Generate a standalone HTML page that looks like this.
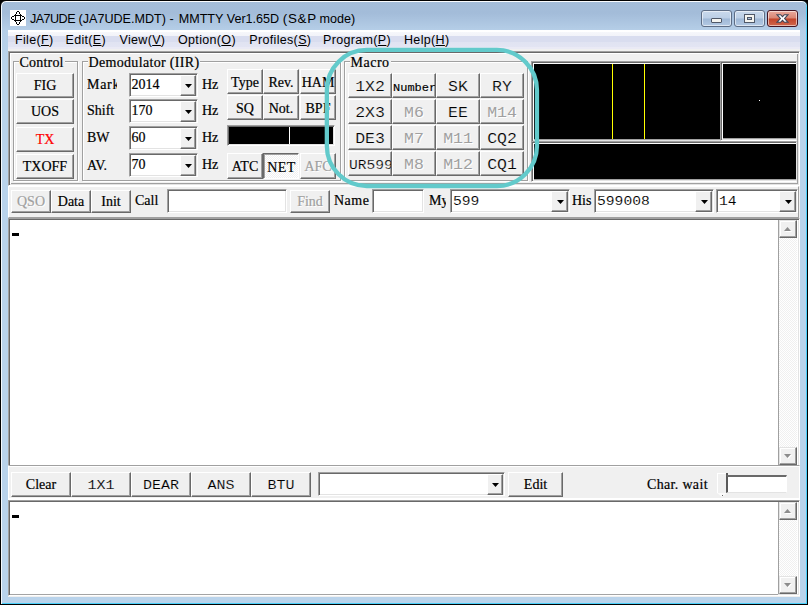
<!DOCTYPE html>
<html>
<head>
<meta charset="utf-8">
<title>MMTTY</title>
<style>
html,body{margin:0;padding:0;}
body{width:808px;height:605px;overflow:hidden;background:#000;position:relative;font-family:"Liberation Serif",serif;font-size:14px;color:#000;-webkit-text-stroke:0.2px currentColor;}
.m,.cb.mono>span,#menu,#ttext{-webkit-text-stroke:0;}
.m>span{-webkit-text-stroke:0.2px #f0f0f0;}
.m.dis>span{-webkit-text-stroke:0;}
.cb.mono>span{-webkit-text-stroke:0.12px #fff;}
.m.s>span{-webkit-text-stroke:0.15px #f0f0f0;}
.abs,#win *{position:absolute;box-sizing:border-box;}
#win u,#ttext span{position:static;}
#win{position:absolute;left:0;top:0;width:808px;height:605px;overflow:hidden;}
#client{left:8px;top:30px;width:792px;height:567px;background:#f0f0f0;}
/* classic raised button */
.b{background:#f0f0f0;border:1px solid;border-color:#fff #696969 #696969 #fff;box-shadow:inset -1px -1px 0 #a0a0a0, inset 1px 1px 0 #f0f0f0;text-align:center;white-space:nowrap;overflow:hidden;font-size:14px;line-height:23px;}
.b.dis{color:#a0a0a0;text-shadow:1px 1px 0 #fff;}
.m{font-family:"Liberation Mono",monospace;font-size:16.5px;line-height:26px;}
.m>span{left:0;right:0;top:0;height:100%;transform:scaleY(.88);transform-origin:50% 75%;}
.scope{border:1px solid;border-color:#a0a0a0 #fff #fff #a0a0a0;box-shadow:inset 1px 1px 0 #696969, inset -1px -1px 0 #e3e3e3, inset 2px 2px 0 #fff, inset -2px -2px 0 #a0a0a0;background:#000;padding:2px;background-clip:content-box;}
.sunk{border:1px solid;border-color:#a0a0a0 #fff #fff #a0a0a0;box-shadow:inset 1px 1px 0 #696969, inset -1px -1px 0 #e3e3e3;background:#fff;}
.lbl{white-space:nowrap;font-size:14px;line-height:16px;}
.grp{border:1px solid #a0a0a0;box-shadow:1px 1px 0 #fff, inset 1px 1px 0 #fff;}
.grp>span{left:4.5px;top:-7px;background:#f0f0f0;padding:0 1px;font-size:14px;line-height:16px;white-space:nowrap;}
.cb{}
.cb>i{right:1px;top:1px;bottom:0;width:16px;background:#f0f0f0;border:1px solid;border-color:#fff #696969 #696969 #fff;box-shadow:inset -1px -1px 0 #a0a0a0;}
.cb>i:after{content:"";position:absolute;left:4px;top:8px;width:7px;height:4px;background:#000;clip-path:polygon(0 0,100% 0,50% 100%);}
.cb>span{left:1.5px;top:2px;font-size:14px;line-height:18px;white-space:nowrap;}
.panel{border:1px solid;border-color:#a0a0a0 #fff #fff #a0a0a0;box-shadow:inset 1px 1px 0 #696969, inset -1px -1px 0 #e3e3e3, inset 2px 2px 0 #fff, inset -2px -2px 0 #a0a0a0;}
.raised{border:1px solid;border-color:#fff #a0a0a0 #a0a0a0 #fff;}
.lowrai{border:1px solid;border-color:#a0a0a0 #fff #fff #fff;box-shadow:inset 0 1px 0 #fff, inset 0 -1px 0 #fff;}
#frame{border:1px solid #000;border-radius:6px 6px 0 0;background:linear-gradient(#a4bdd9 0,#a3bcd9 12px,#b6cfe8 30px,#b9d3eb 60px,#b9d3eb 100%);box-shadow:inset 0 1px 0 #fafcfe, inset 1px 0 0 #f4f9fd, inset -1px 0 0 #4ad0fa, inset 0 -1px 0 #4ad0fa;}
#client{background:#f0f0f0;}
.cap{border:1px solid #5d6d85;border-radius:3px;background:linear-gradient(#c9d9ec 0,#bccfe6 48%,#9fb8d6 52%,#b3c9e3 100%);box-shadow:inset 0 0 0 1px rgba(255,255,255,.55);}
.cap>i{background:#f4f4f0;border:1px solid #4f5868;border-radius:1px;}
#bmax>i{background:transparent;border:2px solid #f4f4f0;outline:1px solid #4f5868;box-shadow:inset 0 0 0 1px #4f5868;border-radius:0;}
.cap.red{border-color:#431422;background:linear-gradient(#e9a99c 0,#d98573 48%,#c2442a 52%,#d0674d 100%);}
#menu{background:linear-gradient(#fff 0,#fff 2px,#f6f7fb 2px,#f2f3f9 6px,#d9ddef 6px,#d9ddef 12px,#e0e3f2 12px,#e3e5f3 17px,#eaeaf5 17px,#eaeaf5 19px,#f0f0f0 19px);font-family:"Liberation Sans",sans-serif;font-size:12.5px;}
#menu>span{top:1.5px;line-height:16px;white-space:nowrap;letter-spacing:0.33px;}
.b.down{border-color:#696969 #fff #fff #696969;box-shadow:inset 1px 1px 0 #a0a0a0;background-color:#fff;background-image:conic-gradient(#f0f0f0 25%,#fff 0 50%,#f0f0f0 0 75%,#fff 0);background-size:2px 2px;padding:1px 0 0 1px;}
.cb.mono>i{width:17px;}
.cb.mono>i:after{left:5px;}
.cb.mono>span{font-family:"Liberation Mono",monospace;font-size:14.67px;left:2px;transform:scaleY(.88);transform-origin:50% 75%;}
.sb{background-color:#fff;background-image:conic-gradient(#f0f0f0 25%,#fff 0 50%,#f0f0f0 0 75%,#fff 0);background-size:2px 2px;border-left:1px solid #a0a0a0;}
.sb>i{left:0;width:18px;height:18px;background:#f0f0f0;border:1px solid;border-color:#e3e3e3 #696969 #696969 #e3e3e3;box-shadow:inset -1px -1px 0 #a0a0a0, inset 1px 1px 0 #fff;}
.sb>i.up{top:0;}
.sb>i.dn{bottom:0;}
.sb>i:after,.sb>i:before{content:"";position:absolute;left:4px;top:6px;width:7px;height:4px;background:#8c8c8c;}
.sb>i:before{left:5px;top:7px;background:#fff;}
.sb>i.up:after,.sb>i.up:before{clip-path:polygon(50% 0,100% 100%,0 100%);}
.sb>i.dn:after,.sb>i.dn:before{clip-path:polygon(0 0,100% 0,50% 100%);}
.trk{background:#fff;border:solid;border-width:2px 1px 1px 2px;border-color:#696969 #fff #e3e3e3 #5a5a5a;}
.thumb{background:#f0f0f0;border-left:1px solid #fff;border-top:1px solid #fff;}
.b.s{font-size:15px;line-height:25px;}
</style>
</head>
<body>
<div id="win">
  <div id="frame" style="left:0;top:0;width:808px;height:605px;"></div>
  <div id="client" style="left:8px;top:30px;width:792px;height:567px;"></div>

  <!-- title bar -->
  <div id="ticon" style="left:10px;top:10px;width:16px;height:16px;background:#fff;">
    <svg style="left:0;top:0" width="16" height="16" viewBox="0 0 16 16" shape-rendering="crispEdges"><path d="M7 1h2v1h-2z M6 2h1v2h-1z M9 2h1v2h-1z M7 14h2v1h-2z M6 12h1v2h-1z M9 12h1v2h-1z M1 7h1v2h-1z M2 6h2v1h-2z M2 9h2v1h-2z M14 7h1v2h-1z M12 6h2v1h-2z M12 9h2v1h-2z M5 4h1v8h-1z M10 4h1v8h-1z M4 5h8v1h-8z M4 10h8v1h-8z" fill="#000"/></svg>
  </div>
  <div id="ttext" style="left:30px;top:10.8px;font-family:'Liberation Sans',sans-serif;font-size:12.6px;line-height:16px;white-space:nowrap;"><span style="letter-spacing:-0.55px">JA7UDE</span> (JA7UDE.MDT) - <span style="margin-left:1.5px">MMTTY Ver1.65D</span> <span style="letter-spacing:0.75px;font-size:13.4px">(S&amp;P</span><span style="margin-left:-1px"> mode)</span></div>
  <div class="cap" id="bmin" style="left:701px;top:10px;width:31px;height:17px;"><i style="left:9px;top:7px;width:11px;height:5px;"></i></div>
  <div class="cap" id="bmax" style="left:734px;top:10px;width:31px;height:17px;"><i style="left:10px;top:4px;width:9px;height:7px;"></i></div>
  <div class="cap red" id="bcls" style="left:767px;top:10px;width:31px;height:17px;"><svg style="left:8px;top:2px" width="13" height="11" viewBox="0 0 13 11"><path d="M1 1.7 H4.6 L6.5 3.7 L8.4 1.7 H12 L8.6 5.5 L12 9.3 H8.4 L6.5 7.3 L4.6 9.3 H1 L4.4 5.5 Z" fill="#fff" stroke="#3f4456" stroke-width="1.1"/></svg></div>

  <!-- menu bar -->
  <div id="menu" style="left:8px;top:30px;width:792px;height:20px;">
    <span style="left:7px;">File(<u>F</u>)</span>
    <span style="left:57.5px;">Edit(<u>E</u>)</span>
    <span style="left:111.5px;">View(<u>V</u>)</span>
    <span style="left:170px;">Option(<u>O</u>)</span>
    <span style="left:241.3px;">Profiles(<u>S</u>)</span>
    <span style="left:315px;">Program(<u>P</u>)</span>
    <span style="left:396px;">Help(<u>H</u>)</span>
  </div>

  <!-- top panel -->
  <div class="panel" style="left:8px;top:51px;width:792px;height:135px;"></div>

  <!-- Control group -->
  <div class="grp" style="left:13px;top:61px;width:65px;height:120px;"><span style="letter-spacing:0.2px">Control</span></div>
  <div class="b" style="left:16px;top:73px;width:58px;height:25px;">FIG</div>
  <div class="b" style="left:16px;top:99px;width:58px;height:25px;">UOS</div>
  <div class="b" style="left:16px;top:127px;width:58px;height:25px;color:#f00;">TX</div>
  <div class="b" style="left:16px;top:154px;width:58px;height:25px;">TXOFF</div>

  <!-- Demodulator group -->
  <div class="grp" style="left:82px;top:61px;width:259px;height:120px;"><span style="letter-spacing:0.33px">Demodulator (IIR)</span></div>
  <div class="lbl" style="left:87px;top:77px;width:29.5px;overflow:hidden;letter-spacing:0.7px;">Mark</div>
  <div class="lbl" style="left:87px;top:103px;">Shift</div>
  <div class="lbl" style="left:87px;top:130px;">BW</div>
  <div class="lbl" style="left:87px;top:158px;">AV.</div>
  <div class="sunk cb" style="left:129px;top:73px;width:69px;height:24px;"><span>2014</span><i></i></div>
  <div class="sunk cb" style="left:129px;top:99px;width:69px;height:24px;"><span>170</span><i></i></div>
  <div class="sunk cb" style="left:129px;top:126px;width:69px;height:24px;"><span>60</span><i></i></div>
  <div class="sunk cb" style="left:129px;top:153px;width:69px;height:24px;"><span>70</span><i></i></div>
  <div class="lbl" style="left:202px;top:77px;">Hz</div>
  <div class="lbl" style="left:202px;top:103px;">Hz</div>
  <div class="lbl" style="left:202px;top:130px;">Hz</div>
  <div class="lbl" style="left:202px;top:157px;">Hz</div>
  <div class="b" style="left:227px;top:69px;width:36px;height:25px;line-height:25px;">Type</div>
  <div class="b" style="left:263px;top:69px;width:36px;height:25px;line-height:25px;">Rev.</div>
  <div class="b" style="left:300px;top:69px;width:36px;height:25px;line-height:25px;">HAM</div>
  <div class="b" style="left:227px;top:95px;width:36px;height:25px;line-height:25px;">SQ</div>
  <div class="b" style="left:263px;top:95px;width:36px;height:25px;line-height:25px;">Not.</div>
  <div class="b" style="left:300px;top:95px;width:36px;height:25px;line-height:25px;">BPF</div>
  <div class="sunk" style="left:227px;top:125px;width:108px;height:21px;background:#000;"><b style="left:61px;top:1px;width:1px;height:17px;background:#fff;"></b></div>
  <div class="b" style="left:227px;top:153px;width:36px;height:26px;line-height:25px;">ATC</div>
  <div class="b down" style="left:263px;top:153px;width:36px;height:26px;line-height:25px;letter-spacing:0.5px;">NET</div>
  <div class="b dis" style="left:300px;top:153px;width:36px;height:26px;line-height:25px;">AFC</div>

  <!-- Macro group -->
  <div class="grp" style="left:344px;top:61px;width:184px;height:120px;"><span style="letter-spacing:0.5px">Macro</span></div>
  <div class="b m" style="left:348px;top:73px;width:44px;height:25px;"><span>1X2</span></div>
  <div class="b m" style="left:392px;top:73px;width:44px;height:25px;font-size:12px;line-height:29px;"><span style="-webkit-text-stroke:0.15px #000">Number</span></div>
  <div class="b m" style="left:436px;top:73px;width:44px;height:25px;"><span>SK</span></div>
  <div class="b m" style="left:480px;top:73px;width:44px;height:25px;"><span>RY</span></div>
  <div class="b m" style="left:348px;top:99px;width:44px;height:25px;"><span>2X3</span></div>
  <div class="b m dis" style="left:392px;top:99px;width:44px;height:25px;"><span>M6</span></div>
  <div class="b m" style="left:436px;top:99px;width:44px;height:25px;"><span>EE</span></div>
  <div class="b m dis" style="left:480px;top:99px;width:44px;height:25px;"><span>M14</span></div>
  <div class="b m" style="left:348px;top:125px;width:44px;height:25px;"><span>DE3</span></div>
  <div class="b m dis" style="left:392px;top:125px;width:44px;height:25px;"><span>M7</span></div>
  <div class="b m dis" style="left:436px;top:125px;width:44px;height:25px;"><span>M11</span></div>
  <div class="b m" style="left:480px;top:125px;width:44px;height:25px;"><span>CQ2</span></div>
  <div class="b m" style="left:348px;top:151px;width:44px;height:25px;font-size:14.6px;line-height:27px;"><span>UR599</span></div>
  <div class="b m dis" style="left:392px;top:151px;width:44px;height:25px;"><span>M8</span></div>
  <div class="b m dis" style="left:436px;top:151px;width:44px;height:25px;"><span>M12</span></div>
  <div class="b m" style="left:480px;top:151px;width:44px;height:25px;"><span>CQ1</span></div>

  <!-- scopes -->
  <div class="scope" style="left:531px;top:61px;width:192px;height:81px;">
    <b style="left:80px;top:2px;width:1px;height:75px;background:#ff0;"></b>
    <b style="left:112px;top:2px;width:1px;height:75px;background:#ff0;"></b>
  </div>
  <div class="scope" style="left:720px;top:61px;width:77px;height:80px;border-right-color:#e3e3e3;padding-right:0;box-shadow:inset 1px 1px 0 #696969, inset 0 -1px 0 #e3e3e3, inset 2px 2px 0 #fff, inset 0 -2px 0 #a0a0a0;"><b style="left:38px;top:38px;width:1px;height:1px;background:#fff;"></b></div>
  <div class="scope" style="left:531px;top:141px;width:266px;height:41px;border-right-color:#e3e3e3;padding-right:0;box-shadow:inset 1px 1px 0 #696969, inset 0 -1px 0 #e3e3e3, inset 2px 2px 0 #fff, inset 0 -2px 0 #a0a0a0;"></div>

  <!-- teal highlight -->
  <svg style="left:0;top:0;z-index:5;pointer-events:none;" width="808" height="605"><rect x="326.85" y="49.95" width="210.1" height="136.05" rx="40" ry="40" fill="none" stroke="#62cacb" stroke-width="4.3"/></svg>

  <!-- QSO row -->
  <div class="raised" style="left:8px;top:186px;width:791px;height:32px;"></div>
  <div class="b dis" style="left:11px;top:190px;width:40px;height:23px;line-height:21px;">QSO</div>
  <div class="b" style="left:51px;top:190px;width:40px;height:23px;line-height:21px;">Data</div>
  <div class="b" style="left:91px;top:190px;width:40px;height:23px;line-height:21px;">Init</div>
  <div class="lbl" style="left:135px;top:193px;">Call</div>
  <div class="sunk" style="left:167px;top:189px;width:120px;height:24px;"></div>
  <div class="b dis" style="left:290px;top:190px;width:40px;height:23px;line-height:21px;">Find</div>
  <div class="lbl" style="left:334px;top:193px;letter-spacing:0.5px;">Name</div>
  <div class="sunk" style="left:372px;top:189px;width:52px;height:24px;"></div>
  <div class="lbl" style="left:429px;top:193px;width:17.2px;overflow:hidden;">My</div>
  <div class="sunk cb mono" style="left:450px;top:189px;width:120px;height:24px;"><span>599</span><i></i></div>
  <div class="lbl" style="left:572px;top:193px;">His</div>
  <div class="sunk cb mono" style="left:594px;top:189px;width:120px;height:24px;"><span>599008</span><i></i></div>
  <div class="sunk cb mono" style="left:716px;top:189px;width:82px;height:24px;"><span>14</span><i></i></div>

  <!-- RX text -->
  <div class="sunk" style="left:8px;top:218px;width:792px;height:249px;">
    <b style="left:3px;top:14px;width:7px;height:3px;background:#000;"></b>
    <div class="sb" style="right:2px;top:1px;bottom:1px;width:19px;"><i class="up"></i><i class="dn"></i></div>
  </div>

  <!-- TX button row -->
  <div class="lowrai" style="left:8px;top:465px;width:792px;height:35px;"></div>
  <div class="b" style="left:11px;top:472px;width:60px;height:25px;">Clear</div>
  <div class="b m s" style="left:71px;top:472px;width:60px;height:25px;"><span>1X1</span></div>
  <div class="b m s" style="left:131px;top:472px;width:60px;height:25px;"><span>DEAR</span></div>
  <div class="b m s" style="left:191px;top:472px;width:60px;height:25px;"><span>ANS</span></div>
  <div class="b m s" style="left:251px;top:472px;width:60px;height:25px;"><span>BTU</span></div>
  <div class="sunk cb" style="left:318px;top:472px;width:187px;height:24px;"><i></i></div>
  <div class="b" style="left:508px;top:472px;width:55px;height:25px;">Edit</div>
  <div class="lbl" style="left:647px;top:477px;letter-spacing:0.33px;">Char. wait</div>
  <div class="trk" style="left:726px;top:475px;width:61px;height:18px;"></div>
  <div style="left:726px;top:473px;width:2px;height:2px;background:#5a5a5a;"></div>
  <div class="thumb" style="left:717px;top:473px;width:9px;height:20px;"></div>
  <div style="left:717px;top:493px;width:10px;height:4px;background:#fbfbfb;clip-path:polygon(0 0,100% 0,50% 100%);"></div>
  <div style="left:722px;top:495px;width:1px;height:1px;background:#666;"></div>

  <!-- TX text -->
  <div class="sunk" style="left:8px;top:500px;width:792px;height:96px;">
    <b style="left:3px;top:14px;width:7px;height:3px;background:#000;"></b>
    <div class="sb" style="right:2px;top:1px;bottom:1px;width:19px;"><i class="up"></i><i class="dn"></i></div>
    <b style="left:1px;right:21px;bottom:0;height:1px;background:#a4a4a4;"></b>
  </div>
</div>
</body>
</html>
